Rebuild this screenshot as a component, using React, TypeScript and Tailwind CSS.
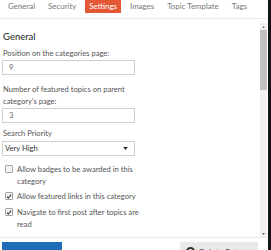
const TABS = ['General', 'Security', 'Settings', 'Images', 'Topic Template', 'Tags'] as const

function Checkbox({ checked }: { checked: boolean }) {
  return (
    <span className="mt-[2px] flex h-[8px] w-[8px] shrink-0 items-center justify-center rounded-[1px] border border-[#a5a5a5] bg-[#f4f4f4]">
      {checked && (
        <svg viewBox="0 0 8 8" className="h-[7px] w-[7px]">
          <path d="M1.2 4.2 3.1 6 6.8 1.6" fill="none" stroke="#333" strokeWidth="1.4" />
        </svg>
      )}
    </span>
  )
}

function CheckRow({ checked, className = '', children }: { checked: boolean; className?: string; children: React.ReactNode }) {
  return (
    <label className={`flex gap-[4px] pl-[3px] leading-[12px] ${className}`}>
      <Checkbox checked={checked} />
      <span className="w-[122px]">{children}</span>
    </label>
  )
}

export default function App() {
  return (
    <div
      className="flex h-[250px] w-[271px] overflow-hidden border-r-[3px] border-[#141414] bg-white text-[7.6px] text-[#555]"
      style={{ fontFamily: 'Lato, "Liberation Sans", sans-serif' }}
    >
      <div className="flex min-w-0 flex-1 flex-col">
        {/* tabs */}
        <div className="flex h-[19px] shrink-0 gap-[5px] border-b border-[#ececec] pl-[4px]">
          {TABS.map((t) => (
            <div
              key={t}
              className={`h-[13px] whitespace-nowrap px-[4px] text-[7.9px] leading-[12px] ${
                t === 'Settings' ? 'bg-[#e45735] text-white' : 'text-[#777]'
              }`}
            >
              {t}
            </div>
          ))}
        </div>

        <div className="flex min-h-0 flex-1">
          {/* form */}
          <div className="min-w-0 flex-1 overflow-hidden pl-[2px] pt-[12px]">
            <h3 className="pl-[1px] text-[9.5px] leading-[12px] text-[#222]">General</h3>

            <div className="mt-[4px] pl-[1px] leading-[12px]">Position on the categories page:</div>
            <div className="mt-[1px] h-[15px] w-[133px] border border-[#cfcfcf] pl-[6px] leading-[13px] text-[#666]">
              9
            </div>

            <div className="mt-[8px] w-[130px] pl-[1px] leading-[12px]">
              Number of featured topics on parent category's page:
            </div>
            <div className="mt-[1px] h-[15px] w-[133px] border border-[#cfcfcf] pl-[6px] leading-[13px] text-[#666]">
              3
            </div>

            <div className="mt-[4px] pl-[1px] leading-[12px]">Search Priority</div>
            <div className="mt-[2px] flex h-[15px] w-[133px] items-center justify-between border border-[#cfcfcf] pl-[2px] pr-[6px] text-[#333]">
              <span>Very High</span>
              <svg viewBox="0 0 6 4" className="h-[3px] w-[5px]">
                <path d="M0 0h6L3 4z" fill="#222" />
              </svg>
            </div>

            <div className="mt-[7px] flex flex-col">
              <CheckRow checked={false}>Allow badges to be awarded in this category</CheckRow>
              <CheckRow checked className="mt-[3px]">Allow featured links in this category</CheckRow>
              <CheckRow checked className="mt-[4px]">Navigate to first post after topics are read</CheckRow>
            </div>
          </div>

          {/* scrollbar */}
          <div className="mr-[1px] mt-[4px] flex w-[7px] shrink-0 flex-col bg-[#f1f1f1]">
            <div className="flex h-[7px] items-center justify-center">
              <svg viewBox="0 0 4 3" className="h-[2px] w-[3px]">
                <path d="M2 0 4 3H0z" fill="#777" />
              </svg>
            </div>
            <div className="h-[60px] bg-[#c1c1c1]" />
            <div className="flex-1" />
            <div className="flex h-[7px] items-center justify-center">
              <svg viewBox="0 0 4 3" className="h-[2px] w-[3px]">
                <path d="M0 0h4L2 3z" fill="#555" />
              </svg>
            </div>
          </div>
        </div>

        {/* footer */}
        <div className="flex h-[13px] shrink-0 justify-between border-t border-[#ececec] pl-[2px] pr-[10px] pt-[4px]">
          <button className="h-[24px] w-[60px] shrink-0 whitespace-nowrap bg-[#1f6fb8] pt-[4px] text-[8px] leading-[12px] text-white">
            Save Category
          </button>
          <button className="flex h-[24px] w-[78px] shrink-0 items-start gap-[4px] whitespace-nowrap bg-[#e9e9e9] pl-[6px] pt-[4px] text-[8px] leading-[12px] text-[#333]">
            <span className="mt-[1px] h-[9px] w-[9px] rounded-full border-[2px] border-[#333]" />
            Delete Category
          </button>
        </div>
      </div>
    </div>
  )
}
